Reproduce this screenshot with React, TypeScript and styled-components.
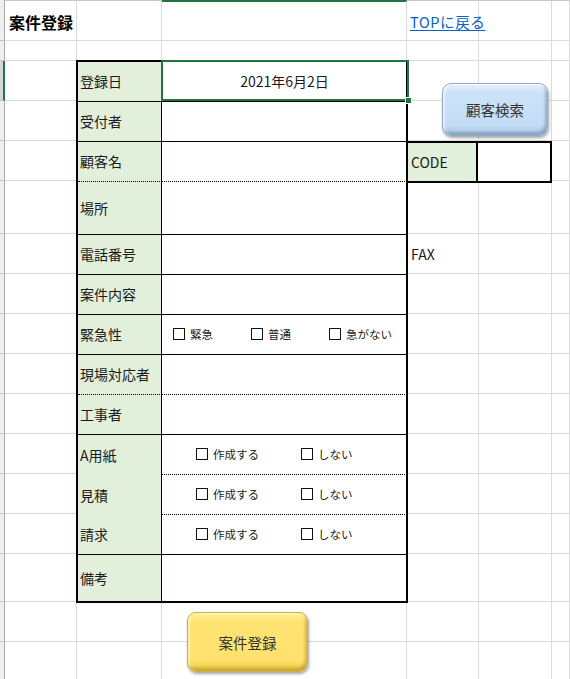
import React from 'react'
import styled, { createGlobalStyle } from 'styled-components'

const GlobalStyle = createGlobalStyle`
  html, body {
    margin: 0;
    padding: 0;
    background: #fff;
  }
  body {
    font-family: "Noto Sans CJK JP", "Noto Sans", sans-serif;
    color: #111;
    overflow: hidden;
  }
`

const COLS = [5, 72, 85, 245, 72, 73]
const ROWS = [41, 20, 40, 40, 40, 53, 40, 40, 40, 40, 40, 40, 40, 40, 48, 40, 40]
const GRID = '#dadada'
const EXCEL_GREEN = '#217346'
const LABEL_BG = '#e2efda'

type Line = 'solid' | 'dotted' | 'none'

const lineStyle = (line: Line) =>
  line === 'solid' ? '1px solid #000' : line === 'dotted' ? '1px dotted #000' : 'none'

const Sheet = styled.div`
  position: relative;
  display: grid;
  grid-template-columns: ${COLS.map((c) => `${c}px`).join(' ')} 1fr;
  grid-template-rows: ${ROWS.map((r) => `${r}px`).join(' ')};
  width: 570px;
  height: 679px;
  overflow: hidden;
`

const Cell = styled.div<{ $r: number; $c: number; $top?: string }>`
  grid-row: ${(p) => p.$r};
  grid-column: ${(p) => p.$c};
  border-right: 1px solid ${GRID};
  border-bottom: 1px solid ${GRID};
  border-top: ${(p) => p.$top || 'none'};
`

const RowEdge = styled.div<{ $r: number; $active?: boolean }>`
  grid-row: ${(p) => p.$r};
  grid-column: 1;
  background: ${(p) => (p.$active ? '#d6d6d6' : '#efefef')};
  border-bottom: 1px solid #c4c4c4;
  border-right: ${(p) => (p.$active ? `2px solid ${EXCEL_GREEN}` : '1px solid #acacac')};
`

const Title = styled.div`
  grid-row: 1;
  grid-column: 2 / 4;
  align-self: center;
  padding: 2px 0 0 4px;
  font-size: 16px;
  font-weight: 700;
  color: #000;
  white-space: nowrap;
`

const TopLink = styled.a`
  grid-row: 1;
  grid-column: 5 / 8;
  align-self: center;
  padding: 1px 0 0 3px;
  font-size: 14.5px;
  letter-spacing: 0.6px;
  color: #0563c1;
  text-decoration: underline;
  text-underline-offset: 2px;
  white-space: nowrap;
`

const Form = styled.div`
  grid-row: 3 / 16;
  grid-column: 3 / 5;
  margin: -1px;
  border: 2px solid #000;
  background: #fff;
  display: grid;
  grid-template-columns: 84px 1fr;
  grid-template-rows: repeat(3, 40px) 53px repeat(8, 40px) 1fr;
`

const Label = styled.div<{ $line: Line }>`
  display: flex;
  align-items: center;
  padding: 0 0 1px 2px;
  background: ${LABEL_BG};
  border-right: 1px solid #000;
  border-bottom: ${(p) => lineStyle(p.$line)};
  font-size: 14px;
  color: #1a1a1a;
  white-space: nowrap;
`

const Value = styled.div<{ $line: Line; $center?: boolean; $indent?: number }>`
  position: relative;
  display: flex;
  align-items: center;
  justify-content: ${(p) => (p.$center ? 'center' : 'flex-start')};
  padding: 0 0 1px ${(p) => p.$indent || 0}px;
  border-bottom: ${(p) => lineStyle(p.$line)};
  font-size: 14px;
  color: #1a1a1a;
`

const Selection = styled.div`
  position: absolute;
  top: -2px;
  left: -1px;
  right: -2px;
  bottom: 0;
  border: 2px solid ${EXCEL_GREEN};
  pointer-events: none;

  &::after {
    content: '';
    position: absolute;
    right: -4px;
    bottom: -4px;
    width: 5px;
    height: 5px;
    background: ${EXCEL_GREEN};
    box-shadow: 0 0 0 1px #fff;
  }
`

const Option = styled.div<{ $width: number }>`
  display: flex;
  align-items: center;
  gap: 5px;
  width: ${(p) => p.$width}px;
  font-size: 11.5px;
  color: #222;
  white-space: nowrap;
`

const Box = styled.span`
  width: 12px;
  height: 12px;
  box-sizing: border-box;
  border: 1px solid #111;
  background: #fff;
  flex: none;
`

const CodeBox = styled.div`
  grid-row: 5;
  grid-column: 5 / 7;
  margin: 0 0 -2px -1px;
  border: 2px solid #000;
  display: grid;
  grid-template-columns: 70px 1fr;
  background: #fff;
`

const CodeLabel = styled.div`
  display: flex;
  align-items: center;
  padding-left: 3px;
  background: ${LABEL_BG};
  border-right: 2px solid #000;
  font-size: 14px;
  color: #1a1a1a;
`

const Fax = styled.div`
  grid-row: 7;
  grid-column: 5;
  align-self: center;
  padding-left: 4px;
  font-size: 14px;
  color: #1a1a1a;
`

const ShapeButton = styled.div`
  position: absolute;
  display: flex;
  align-items: center;
  justify-content: center;
  box-sizing: border-box;
  border-radius: 9px;
  font-size: 14.5px;
  color: #333;
  cursor: pointer;
`

const SearchButton = styled(ShapeButton)`
  left: 442px;
  top: 83px;
  width: 106px;
  height: 53px;
  border: 1px solid #93a9c3;
  background: linear-gradient(to bottom, #e4f0fc 0%, #cbe2f8 18%, #c4ddf6 80%, #adc6e1 100%);
  box-shadow:
    inset 0 1px 1px #fff,
    inset -2px -3px 3px rgba(80, 110, 150, 0.45),
    inset 2px 0 2px rgba(255, 255, 255, 0.6),
    1px 2px 3px rgba(0, 0, 0, 0.35);
`

const RegisterButton = styled(ShapeButton)`
  left: 187px;
  top: 612px;
  width: 121px;
  height: 60px;
  border: 1px solid #cfae3c;
  background: linear-gradient(to bottom, #fff0a0 0%, #ffe474 15%, #ffe16c 82%, #e9c647 100%);
  box-shadow:
    inset 0 1px 1px #fff6c8,
    inset -2px -3px 3px rgba(160, 120, 20, 0.45),
    inset 2px 0 2px rgba(255, 250, 210, 0.6),
    1px 2px 3px rgba(0, 0, 0, 0.35);
`

type FormRow = {
  label: string
  labelLine: Line
  valueLine: Line
  options?: string[]
  date?: string
}

const URGENCY = ['緊急', '普通', '急がない']
const MAKE = ['作成する', 'しない']

const formRows: FormRow[] = [
  { label: '登録日', labelLine: 'solid', valueLine: 'solid', date: '2021年6月2日' },
  { label: '受付者', labelLine: 'solid', valueLine: 'solid' },
  { label: '顧客名', labelLine: 'dotted', valueLine: 'dotted' },
  { label: '場所', labelLine: 'solid', valueLine: 'solid' },
  { label: '電話番号', labelLine: 'solid', valueLine: 'solid' },
  { label: '案件内容', labelLine: 'solid', valueLine: 'solid' },
  { label: '緊急性', labelLine: 'solid', valueLine: 'solid', options: URGENCY },
  { label: '現場対応者', labelLine: 'dotted', valueLine: 'dotted' },
  { label: '工事者', labelLine: 'solid', valueLine: 'solid' },
  { label: 'A用紙', labelLine: 'none', valueLine: 'dotted', options: MAKE },
  { label: '見積', labelLine: 'none', valueLine: 'dotted', options: MAKE },
  { label: '請求', labelLine: 'solid', valueLine: 'solid', options: MAKE },
  { label: '備考', labelLine: 'none', valueLine: 'none' },
]

const App = () => {
  const cells: React.ReactNode[] = []
  ROWS.forEach((_, ri) => {
    const r = ri + 1
    cells.push(<RowEdge key={`e${r}`} $r={r} $active={r === 3} />)
    for (let c = 2; c <= 7; c++) {
      const top = r === 1 ? (c === 4 ? `2px solid ${EXCEL_GREEN}` : '1px solid #c6c6c6') : undefined
      cells.push(<Cell key={`${r}-${c}`} $r={r} $c={c} $top={top} />)
    }
  })

  return (
    <>
      <GlobalStyle />
      <Sheet>
        {cells}

        <Title>案件登録</Title>
        <TopLink href="#top">TOPに戻る</TopLink>

        <Form>
          {formRows.map((row) => {
            const wide = row.options && row.options.length === 3
            return (
              <React.Fragment key={row.label}>
                <Label $line={row.labelLine}>{row.label}</Label>
                <Value
                  $line={row.valueLine}
                  $center={!!row.date}
                  $indent={row.options ? (wide ? 11 : 34) : 0}
                >
                  {row.date}
                  {row.date && <Selection />}
                  {row.options?.map((opt) => (
                    <Option key={opt} $width={wide ? 78 : 105}>
                      <Box />
                      {opt}
                    </Option>
                  ))}
                </Value>
              </React.Fragment>
            )
          })}
        </Form>

        <CodeBox>
          <CodeLabel>CODE</CodeLabel>
          <div />
        </CodeBox>

        <Fax>FAX</Fax>

        <SearchButton>顧客検索</SearchButton>
        <RegisterButton>案件登録</RegisterButton>
      </Sheet>
    </>
  )
}

export default App
